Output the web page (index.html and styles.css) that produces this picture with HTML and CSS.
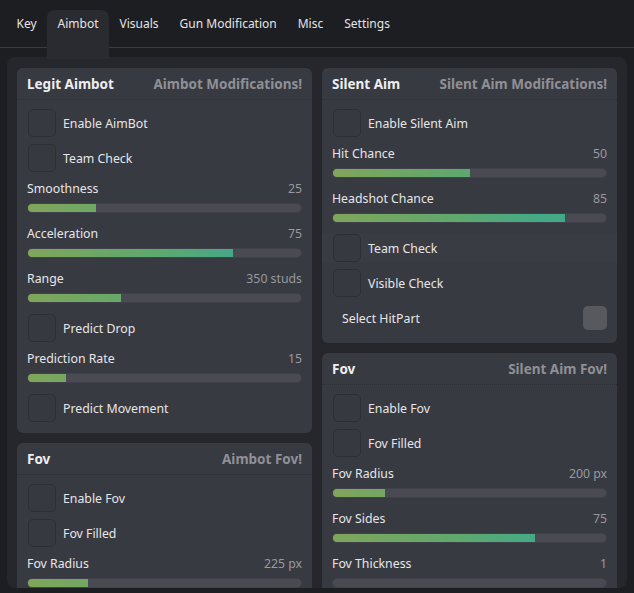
FILE: index.html
```html
<!DOCTYPE html>
<html>
<head>
<meta charset="utf-8">
<link rel="stylesheet" href="styles.css">
</head>
<body>
<div class="app">
  <nav class="tabs">
    <div class="tab">Key</div>
    <div class="tab active">Aimbot</div>
    <div class="tab">Visuals</div>
    <div class="tab">Gun Modification</div>
    <div class="tab">Misc</div>
    <div class="tab">Settings</div>
  </nav>
  <main class="content">
    <div class="column">
      <section class="panel">
        <header class="panel-head"><span class="title">Legit Aimbot</span><span class="subtitle">Aimbot Modifications!</span></header>
        <div class="panel-body">
          <div class="check"><span class="box"></span>Enable AimBot</div>
          <div class="check"><span class="box"></span>Team Check</div>
          <div class="slider"><div class="slider-top"><span>Smoothness</span><span class="val">25</span></div><div class="track"><div class="fill" style="width:25%"><i></i></div></div></div>
          <div class="slider"><div class="slider-top"><span>Acceleration</span><span class="val">75</span></div><div class="track"><div class="fill" style="width:75%"><i></i></div></div></div>
          <div class="slider"><div class="slider-top"><span>Range</span><span class="val">350 studs</span></div><div class="track"><div class="fill" style="width:34%"><i></i></div></div></div>
          <div class="check"><span class="box"></span>Predict Drop</div>
          <div class="slider"><div class="slider-top"><span>Prediction Rate</span><span class="val">15</span></div><div class="track"><div class="fill" style="width:14%"><i></i></div></div></div>
          <div class="check"><span class="box"></span>Predict Movement</div>
        </div>
      </section>
      <section class="panel">
        <header class="panel-head"><span class="title">Fov</span><span class="subtitle">Aimbot Fov!</span></header>
        <div class="panel-body">
          <div class="check"><span class="box"></span>Enable Fov</div>
          <div class="check"><span class="box"></span>Fov Filled</div>
          <div class="slider"><div class="slider-top"><span>Fov Radius</span><span class="val">225 px</span></div><div class="track"><div class="fill" style="width:22%"><i></i></div></div></div>
        </div>
      </section>
    </div>
    <div class="column">
      <section class="panel">
        <header class="panel-head"><span class="title">Silent Aim</span><span class="subtitle">Silent Aim Modifications!</span></header>
        <div class="panel-body">
          <div class="check"><span class="box"></span>Enable Silent Aim</div>
          <div class="slider"><div class="slider-top"><span>Hit Chance</span><span class="val">50</span></div><div class="track"><div class="fill" style="width:50%"><i></i></div></div></div>
          <div class="slider"><div class="slider-top"><span>Headshot Chance</span><span class="val">85</span></div><div class="track"><div class="fill" style="width:85%"><i></i></div></div></div>
          <div class="check hover"><span class="box"></span>Team Check</div>
          <div class="check"><span class="box"></span>Visible Check</div>
          <div class="dropdown"><span>Select HitPart</span><span class="drop-btn"></span></div>
        </div>
      </section>
      <section class="panel">
        <header class="panel-head"><span class="title">Fov</span><span class="subtitle">Silent Aim Fov!</span></header>
        <div class="panel-body">
          <div class="check"><span class="box"></span>Enable Fov</div>
          <div class="check"><span class="box"></span>Fov Filled</div>
          <div class="slider"><div class="slider-top"><span>Fov Radius</span><span class="val">200 px</span></div><div class="track"><div class="fill" style="width:19%"><i></i></div></div></div>
          <div class="slider"><div class="slider-top"><span>Fov Sides</span><span class="val">75</span></div><div class="track"><div class="fill" style="width:74%"><i></i></div></div></div>
          <div class="slider"><div class="slider-top"><span>Fov Thickness</span><span class="val">1</span></div><div class="track"><div class="fill" style="width:0%"><i></i></div></div></div>
        </div>
      </section>
    </div>
  </main>
</div>
</body>
</html>
```
FILE: styles.css
```css
* { box-sizing: border-box; }
html, body { margin: 0; height: 100%; }
body {
  background: #1d1e22;
  font-family: "Noto Sans", "DejaVu Sans", sans-serif;
  font-size: 12px;
  color: #e6e6e8;
  overflow: hidden;
}
.app { display: flex; flex-direction: column; height: 593px; }
.tabs {
  display: flex;
  height: 48px;
  padding: 10px 0 0 6px;
  border-bottom: 1px solid #3a3b41;
  flex: none;
}
.tab {
  padding: 0 10.5px;
  height: 28px;
  line-height: 27px;
  color: #e4e4e6;
  font-size: 12px;
}
.tab.active {
  background: #2a2b30;
  border-radius: 8px 8px 0 0;
  height: 49px;
  position: relative;
  z-index: 1;
}
.content {
  margin: 9px 7px 5px 7px;
  background: #26272c;
  border-radius: 8px;
  padding: 11px 10px 0 10px;
  display: grid;
  grid-template-columns: 295px 295px;
  column-gap: 10px;
  align-items: start;
  overflow: hidden;
  flex: 1;
  min-height: 0;
}
.column { display: flex; flex-direction: column; gap: 10px; }
.panel {
  background: #383a42;
  border-radius: 6px;
}
.panel-head {
  height: 32px;
  display: flex;
  align-items: center;
  justify-content: space-between;
  padding: 0 10px;
  border-bottom: 1px dotted #2b2c32;
  font-weight: 700;
  font-size: 13.5px;
}
.title { color: #eeeef0; }
.subtitle { color: #8f9095; }
.panel-body {
  padding: 9px 10px 11px 10px;
  display: flex;
  flex-direction: column;
  gap: 7px;
}
.check {
  height: 28px;
  display: flex;
  align-items: center;
  gap: 7px;
  padding-left: 1px;
  font-size: 12.3px;
}
.check.hover { background: #3a3c44; margin: 0 -10px; padding-left: 11px; }
.box {
  width: 28px;
  height: 28px;
  border: 1px solid #2e2f36;
  border-radius: 5px;
  background: #373941;
}
.slider { padding-bottom: 4px; }
.slider-top {
  height: 18px;
  display: flex;
  justify-content: space-between;
  align-items: center;
  margin-bottom: 6px;
  font-size: 12.3px;
}
.val { color: #98999e; font-size: 12.3px; }
.track {
  height: 10px;
  border-radius: 5px;
  background: #4a4b52;
  border: 1px solid #40414a;
  overflow: hidden;
}
.fill { height: 100%; overflow: hidden; }
.fill i {
  display: block;
  width: 275px;
  height: 100%;
  background: linear-gradient(90deg, #80a65a 0%, #5fa86e 45%, #44a986 75%, #3fa98c 100%);
}
.dropdown {
  height: 28px;
  display: flex;
  align-items: center;
  justify-content: space-between;
  padding-left: 10px;
  font-size: 12.3px;
}
.drop-btn {
  width: 24px;
  height: 24px;
  border-radius: 5px;
  background: #58595f;
}
```
